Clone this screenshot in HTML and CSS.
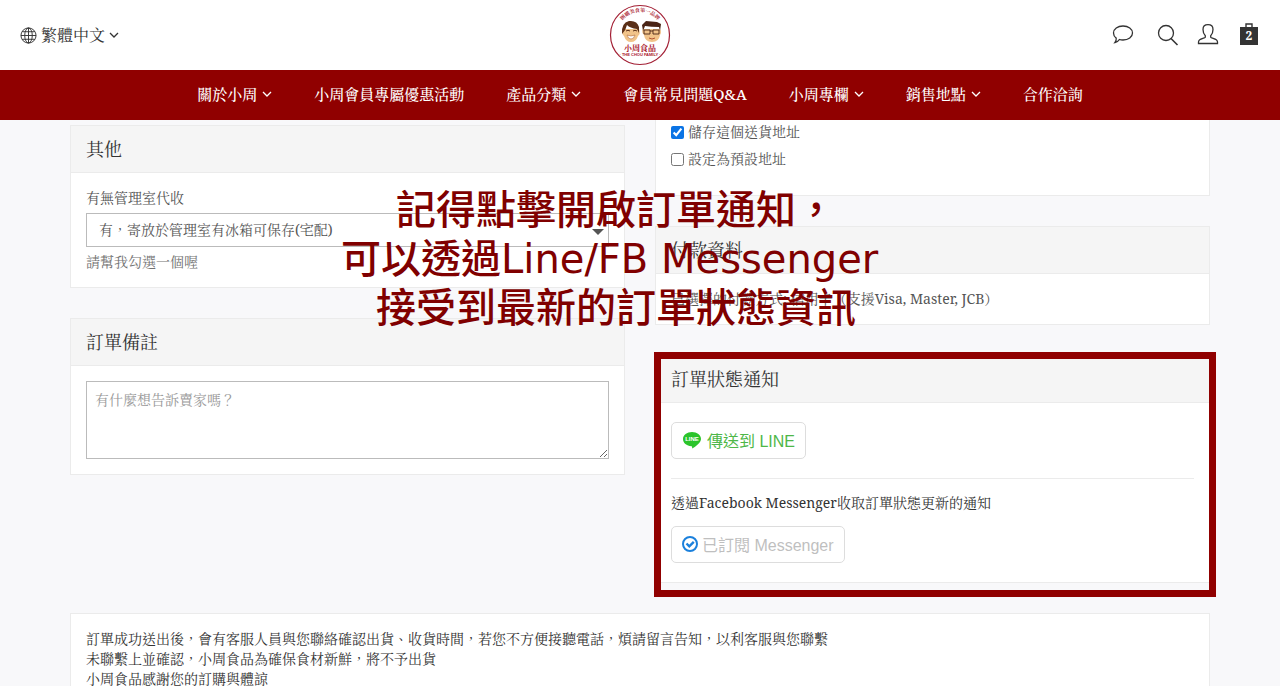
FILE: index.html
```html
<!DOCTYPE html>
<html lang="zh-Hant">

<head>
    <meta charset="UTF-8">
    <meta name="viewport" content="width=device-width, initial-scale=1.0">
    <title>小周食品 - 結帳</title>
    <link rel="stylesheet" href="styles.css">
</head>

<body>
    <header class="header">
        <div class="topbar">
            <button type="button" class="lang">
                <svg class="icon-globe" viewBox="0 0 18 18" fill="none" stroke="currentColor">
                    <circle cx="9" cy="9" r="8" />
                    <ellipse cx="9" cy="9" rx="4" ry="8" />
                    <path d="M9 1v16M1 9h16M2.2 5h13.6M2.2 13h13.6" />
                </svg>
                <span>繁體中文</span>
                <svg class="caret" viewBox="0 0 10 6"><path d="M1 1l4 4 4-4" /></svg>
            </button>

            <a href="#" class="logo" aria-label="小周食品">
                <svg viewBox="0 0 62 62">
                    <defs>
                        <path id="logo-arc" d="M8 31a23 23 0 0 1 46 0" />
                    </defs>
                    <circle cx="31" cy="31" r="29.5" fill="#fff" stroke="#a32035" stroke-width="1.2" />
                    <text class="logo-top" text-anchor="middle"><textPath href="#logo-arc" startOffset="50%">團購美食第一品牌</textPath></text>
                    <!-- 左邊的臉 -->
                    <path d="M14 25q-2 5 1 7 2 6 7 6t7-6q3-2 1-7z" fill="#f1c389" />
                    <path d="M13 30q-1-11 7-13 8-1 10 6v6l-2-4q-7-1-10-4-1 5-5 9z" fill="#5a2f17" />
                    <path d="M17 27q2-1.500 4 0M24 27q2-1.500 4 0" stroke="#5a2f17" fill="none" />
                    <path d="M18 31q4 2 8 0-1 4-4 4t-4-4z" fill="#fff" stroke="#b06a3a" stroke-width=".6" />
                    <!-- 右邊的臉 -->
                    <path d="M34 25h17q2 3 0 6-1 7-8 7t-8-7q-3-3-1-6z" fill="#f1c389" />
                    <path d="M34 27l-1-6 4-4 11 1 4 2-1 7-1-4q-8 0-14-1z" fill="#4a2415" />
                    <path d="M35 26h6v4h-6zM44 26h6v4h-6zM41 27h3" fill="none" stroke="#4a2415" stroke-width=".9" />
                    <path d="M40 34q3 2 6 0" fill="none" stroke="#b0522f" />
                    <text class="logo-name" x="31" y="47" text-anchor="middle">小周食品</text>
                    <text class="logo-sub" x="31" y="52" text-anchor="middle">· THE CHOU FAMILY ·</text>
                </svg>
            </a>

            <div class="tools">
                <a href="#" class="tool" aria-label="訊息">
                    <svg viewBox="0 0 22 22" fill="none" stroke="currentColor">
                        <path d="M12 2c5.400 0 9.500 3 9.500 7s-4.100 7-9.500 7q-2 0-3.600-.5-1.500 2.500-4.400 3 1.500-1.700 1.200-4.400Q2.500 12.200 2.500 9c0-4 4.100-7 9.500-7z" />
                    </svg>
                </a>
                <a href="#" class="tool tool-search" aria-label="搜尋">
                    <svg viewBox="0 0 22 22" fill="none" stroke="currentColor">
                        <circle cx="10" cy="9" r="7.5" />
                        <path d="M15 14.500l6.500 6.500" stroke-width="1.6" />
                    </svg>
                </a>
                <a href="#" class="tool" aria-label="會員">
                    <svg viewBox="0 0 22 22" fill="none" stroke="currentColor">
                        <path d="M8.300 13.200v-1.500C6.500 10 6 7.800 6 5.500 6 2.500 8 .7 11 .7s5 1.800 5 4.800c0 2.300-.5 4.500-2.300 6.200v1.500c.6 1.500 6.800 1.300 6.800 4.800v1.500h-19V18c0-3.500 6.200-3.300 6.800-4.800z" />
                    </svg>
                </a>
                <a href="#" class="tool tool-cart" aria-label="購物車">
                    <svg viewBox="0 0 22 22">
                        <path d="M8 4V0h6v4" fill="none" stroke="currentColor" stroke-width="1.4" />
                        <path d="M2 3h18v18H2z" fill="currentColor" />
                    </svg>
                    <span class="cart-count">2</span>
                </a>
            </div>
        </div>

        <nav class="nav">
            <a href="#">關於小周 <svg class="caret" viewBox="0 0 10 6"><path d="M1 1l4 4 4-4" /></svg></a>
            <a href="#">小周會員專屬優惠活動</a>
            <a href="#">產品分類 <svg class="caret" viewBox="0 0 10 6"><path d="M1 1l4 4 4-4" /></svg></a>
            <a href="#">會員常見問題Q&amp;A</a>
            <a href="#">小周專欄 <svg class="caret" viewBox="0 0 10 6"><path d="M1 1l4 4 4-4" /></svg></a>
            <a href="#">銷售地點 <svg class="caret" viewBox="0 0 10 6"><path d="M1 1l4 4 4-4" /></svg></a>
            <a href="#">合作洽詢</a>
        </nav>
    </header>

    <main class="container">
        <div class="columns">
            <div class="col col-left">
                <section class="panel">
                    <h2>其他</h2>
                    <div class="panel-body">
                        <label for="guard">有無管理室代收</label>
                        <div class="select">
                            <select id="guard">
                                <option>有，寄放於管理室有冰箱可保存(宅配)</option>
                            </select>
                        </div>
                        <p class="help">請幫我勾選一個喔</p>
                    </div>
                </section>

                <section class="panel">
                    <h2>訂單備註</h2>
                    <div class="panel-body">
                        <textarea aria-label="訂單備註" placeholder="有什麼想告訴賣家嗎？"></textarea>
                    </div>
                </section>
            </div>

            <div class="col">
                <section class="panel panel-address">
                    <label><input type="checkbox" checked> 儲存這個送貨地址</label>
                    <label><input type="checkbox"> 設定為預設地址</label>
                </section>

                <section class="panel">
                    <h2>付款資料</h2>
                    <div class="panel-body">
                        <p class="payment">已選擇的付款方式: 信用卡（支援Visa, Master, JCB）</p>
                    </div>
                </section>

                <section class="panel panel-notify">
                    <h2>訂單狀態通知</h2>
                    <div class="panel-body">
                        <button type="button" class="btn btn-line">
                            <svg viewBox="0 0 20 20">
                                <path d="M10 2c5 0 9 3.100 9 7 0 3.600-5 7.500-9 9.500.2-1 .5-2-.5-2.300C4.500 16 1 12.900 1 9c0-3.900 4-7 9-7z" fill="#2bc42b" />
                                <text x="10" y="11" text-anchor="middle">LINE</text>
                            </svg>
                            傳送到 LINE
                        </button>
                        <hr>
                        <p>透過Facebook Messenger收取訂單狀態更新的通知</p>
                        <button type="button" class="btn btn-messenger" disabled>
                            <svg viewBox="0 0 16 16" fill="none" stroke="#1b80dc" stroke-width="2">
                                <circle cx="8" cy="8" r="7" />
                                <path d="M4.500 7.500l2.800 2.800 4.500-4.500" stroke-width="2.4" />
                            </svg>
                            已訂閱 Messenger
                        </button>
                    </div>
                    <div class="highlight"></div>
                </section>
            </div>
        </div>

        <section class="panel notice">
            <p>訂單成功送出後，會有客服人員與您聯絡確認出貨、收貨時間，若您不方便接聽電話，煩請留言告知，以利客服與您聯繫</p>
            <p>未聯繫上並確認，小周食品為確保食材新鮮，將不予出貨</p>
            <p>小周食品感謝您的訂購與體諒</p>
        </section>

        <div class="callout">
            記得點擊開啟訂單通知，<br>
            可以透過Line/FB Messenger&nbsp;<br>
            接受到最新的訂單狀態資訊
        </div>
    </main>
</body>

</html>
```
FILE: styles.css
```css
* {
    box-sizing: border-box;
}

body {
    margin: 0;
    font-family: "Noto Serif", "Liberation Serif", "Noto Serif CJK TC", "Noto Sans CJK TC", serif;
    font-size: 14px;
    line-height: 20px;
    color: #333;
    background-color: #f8f8fa;
}

p,
h2 {
    margin: 0;
}

button,
select,
textarea {
    font-family: inherit;
    color: inherit;
}

/* Header */
.header {
    position: sticky;
    top: 0;
    z-index: 10;
    background-color: #fff;
}

.topbar {
    display: grid;
    grid-template-columns: 1fr auto 1fr;
    align-items: center;
    height: 70px;
    padding: 0 20px;
}

.lang {
    display: flex;
    align-items: center;
    justify-self: start;
    gap: 4px;
    padding: 0;
    border: none;
    background: none;
    font-size: 16px;
    line-height: 24px;
    cursor: pointer;
}

.icon-globe {
    width: 17px;
    height: 17px;
}

.caret {
    width: 10px;
    height: 6px;
    fill: none;
    stroke: currentColor;
    stroke-width: 1.3;
}

.logo svg {
    display: block;
    width: 62px;
    height: 62px;
}

.logo text {
    fill: #a9152b;
    font-weight: bold;
}

.logo-top {
    font-size: 5px;
}

.logo-name {
    font-size: 8px;
}

.logo-sub {
    font-family: "Liberation Sans", sans-serif;
    font-size: 4px;
}

.tools {
    display: flex;
    justify-self: end;
}

.tool {
    position: relative;
    width: 22px;
    height: 22px;
    margin-left: 19px;
    color: #333;
}

.tool-search {
    margin-left: 23px;
}

.tool svg {
    display: block;
    overflow: visible;
    width: 22px;
    height: 22px;
    stroke-width: 1.3;
}

.cart-count {
    position: absolute;
    top: 3px;
    left: 0;
    width: 22px;
    text-align: center;
    font-size: 12px;
    line-height: 18px;
    font-weight: bold;
    color: #fff;
}

.nav {
    display: flex;
    justify-content: center;
    align-items: center;
    gap: 42px;
    height: 50px;
    padding-bottom: 2px;
    background-color: #900000;
}

.nav a {
    display: flex;
    align-items: center;
    gap: 5px;
    color: #fff;
    font-size: 15px;
    font-weight: 500;
    text-decoration: none;
    white-space: nowrap;
}

/* Content */
.container {
    position: relative;
    max-width: 1140px;
    margin: 0 auto;
}

.columns {
    display: grid;
    grid-template-columns: 1fr 1fr;
    gap: 30px;
}

.col {
    display: flex;
    flex-direction: column;
    gap: 30px;
}

.col-left {
    padding-top: 5px;
}

.panel {
    border: 1px solid #ebebeb;
    background-color: #fff;
}

.panel h2 {
    padding: 10px 15px;
    border-bottom: 1px solid #ebebeb;
    background-color: #f5f5f5;
    font-size: 18px;
    line-height: 26px;
    font-weight: normal;
}

.panel-body {
    padding: 15px;
    color: #555;
}

.select {
    position: relative;
    margin: 5px 0;
}

.select::after {
    content: "";
    position: absolute;
    top: 16px;
    right: 5px;
    border: 6px solid transparent;
    border-top-color: #555;
    border-bottom: none;
    pointer-events: none;
}

select {
    display: block;
    appearance: none;
    width: 100%;
    height: 34px;
    padding: 0 12px 2px;
    border: 1px solid #bbb;
    border-radius: 0;
    background-color: #fff;
    font-size: 14px;
}

.help {
    color: #737373;
}

textarea {
    display: block;
    width: 100%;
    height: 78px;
    padding: 8px;
    border: 1px solid #bbb;
    font-size: 14px;
    line-height: 20px;
    resize: vertical;
}

textarea::placeholder {
    color: #999;
}

.panel-address {
    display: flex;
    flex-direction: column;
    gap: 7px;
    padding: 2px 15px 26px;
    border-top: none;
    color: #555;
}

.panel-address label {
    display: flex;
    align-items: center;
    gap: 4px;
}

.panel-address input {
    width: 13px;
    height: 13px;
    margin: 0;
    accent-color: #0b74e5;
}

.panel-notify {
    position: relative;
}

.panel-notify .panel-body {
    padding: 19px 15px;
    color: #333;
}

.panel-notify hr {
    margin: 19px 0 14px;
    border: none;
    border-top: 1px solid #ebebeb;
}

.panel-notify p {
    margin-bottom: 13px;
}

.btn {
    display: flex;
    align-items: center;
    gap: 5px;
    height: 37px;
    padding: 0 10px 2px;
    border: 1px solid #ddd;
    border-radius: 5px;
    background-color: #fff;
    font-family: "Liberation Sans", "Noto Sans CJK TC", sans-serif;
    font-size: 16px;
}

.btn-line {
    color: #4eb748;
}

.btn-line svg {
    width: 20px;
    height: 20px;
}

.btn-line text {
    fill: #fff;
    font-size: 6px;
    font-weight: bold;
}

.btn-messenger {
    gap: 4px;
    color: #bfbfbf;
}

.btn-messenger svg {
    overflow: visible;
    width: 16px;
    height: 16px;
}

.highlight {
    position: absolute;
    top: -4px;
    right: -7px;
    bottom: -15px;
    left: -2px;
    border: 7px solid #900000;
}

.notice {
    margin-top: 30px;
    padding: 15px;
}

.callout {
    position: absolute;
    top: 66px;
    right: 48px;
    left: 0;
    font-family: "DejaVu Sans", "Noto Sans CJK TC", sans-serif;
    font-size: 40px;
    font-weight: 500;
    line-height: 49px;
    text-align: center;
    color: #800000;
    pointer-events: none;
}
```
